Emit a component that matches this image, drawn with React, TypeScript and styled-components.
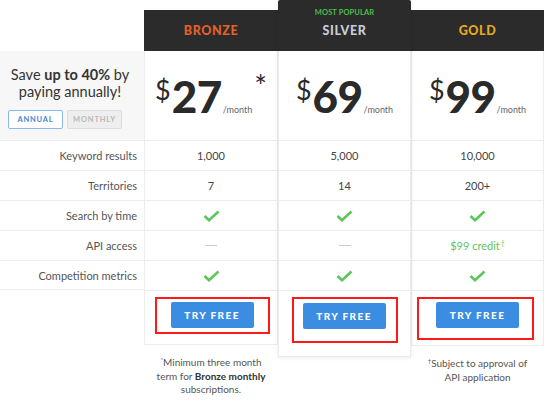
import React from "react";
import styled, { createGlobalStyle } from "styled-components";

const GlobalStyle = createGlobalStyle`
  body {
    margin: 0;
    background: #ffffff;
    font-family: Lato, "Open Sans", Arial, sans-serif;
    color: #444;
  }
`;

const Page = styled.div`
  display: flex;
  align-items: flex-start;
  width: 554px;
  height: 402px;
  overflow: hidden;
`;

const LabelColumn = styled.div`
  width: 144px;
  display: flex;
  flex-direction: column;
  padding-top: 51px;
`;

const Promo = styled.div`
  height: 89px;
  background: #f7f7f7;
  display: flex;
  flex-direction: column;
  align-items: center;
  justify-content: center;
  box-sizing: border-box;
  padding-top: 4px;
`;

const PromoText = styled.div`
  font-size: 14.5px;
  line-height: 17px;
  color: #333;
  text-align: center;
  margin-left: -4px;
  b {
    font-weight: 700;
  }
`;

const Toggle = styled.div`
  display: flex;
  gap: 4px;
  margin-top: 10px;
  align-self: flex-start;
  margin-left: 8px;
`;

const ToggleButton = styled.div<{ $active?: boolean }>`
  width: 55px;
  height: 19px;
  box-sizing: border-box;
  display: flex;
  align-items: center;
  justify-content: center;
  font-size: 7.5px;
  font-weight: 700;
  letter-spacing: 0.8px;
  border-radius: 2px;
  border: 1px solid ${({ $active }) => ($active ? "#8ab8ec" : "#dcdcdc")};
  background: ${({ $active }) => ($active ? "#ffffff" : "#eeeeee")};
  color: ${({ $active }) => ($active ? "#4a86cf" : "#b8b8b8")};
`;

const LabelRow = styled.div<{ $last?: boolean }>`
  height: 30px;
  box-sizing: border-box;
  border-top: 1px solid #ececec;
  border-bottom: ${({ $last }) => ($last ? "1px solid #ececec" : "none")};
  display: flex;
  align-items: center;
  justify-content: flex-end;
  padding-right: 7px;
  font-size: 11px;
  color: #555;
`;

const PlanColumn = styled.div<{ $width: number; $top: number }>`
  width: ${({ $width }) => $width}px;
  margin-top: ${({ $top }) => $top}px;
  display: flex;
  flex-direction: column;
  align-items: center;
`;

const Card = styled.div<{ $featured?: boolean }>`
  width: 100%;
  box-sizing: border-box;
  border: 1px solid #ececec;
  border-top: none;
  background: #fff;
  box-shadow: ${({ $featured }) =>
    $featured ? "0 1px 4px rgba(0, 0, 0, 0.08)" : "none"};
  position: relative;
  z-index: ${({ $featured }) => ($featured ? 1 : 0)};
`;

const Header = styled.div<{ $height: number; $featured?: boolean }>`
  height: ${({ $height }) => $height}px;
  background: #2b2b2b;
  border-radius: ${({ $featured }) => ($featured ? "2px 2px 0 0" : "0")};
  margin: 0 -1px;
  display: flex;
  flex-direction: column;
  align-items: center;
  justify-content: flex-end;
  padding-bottom: 13px;
  box-sizing: border-box;
`;

const Popular = styled.div`
  font-size: 7.5px;
  font-weight: 700;
  color: #4cbf4c;
  margin-bottom: 6px;
  letter-spacing: 0.1px;
`;

const PlanName = styled.div<{ $color: string }>`
  font-size: 12.5px;
  font-weight: 900;
  letter-spacing: 0.6px;
  color: ${({ $color }) => $color};
`;

const PriceCell = styled.div`
  height: 89px;
  display: flex;
  align-items: center;
  justify-content: center;
`;

const Price = styled.div`
  display: flex;
  align-items: flex-start;
  color: #2a2a2a;
`;

const Dollar = styled.span`
  font-size: 27px;
  line-height: 27px;
  margin-top: -2px;
  margin-right: 1px;
`;

const Amount = styled.span`
  font-size: 44px;
  font-weight: 900;
  line-height: 36px;
  letter-spacing: -0.5px;
`;

const PerMonth = styled.span`
  font-size: 9px;
  color: #666;
  align-self: flex-end;
  margin-bottom: -1px;
  margin-left: 1px;
`;

const Star = styled.span`
  font-size: 30px;
  line-height: 20px;
  margin-left: 2px;
  margin-top: -3px;
`;

const FeatureCell = styled.div<{ $green?: boolean }>`
  height: 30px;
  box-sizing: border-box;
  border-top: 1px solid #ececec;
  display: flex;
  align-items: center;
  justify-content: center;
  font-size: 11px;
  color: ${({ $green }) => ($green ? "#62c262" : "#444")};
  sup {
    font-size: 7px;
    margin-left: 1px;
    align-self: flex-start;
    margin-top: 8px;
  }
`;

const Dash = styled.span`
  width: 12px;
  height: 1px;
  background: #cbcbcb;
`;

const ActionCell = styled.div<{ $height: number }>`
  height: ${({ $height }) => $height}px;
  border-top: 1px solid #ececec;
  display: flex;
  justify-content: center;
  align-items: flex-start;
  padding-top: 6px;
  box-sizing: border-box;
`;

const Highlight = styled.div<{ $pad: string; $shift: number }>`
  border: 2px solid #ff1a1a;
  padding: ${({ $pad }) => $pad};
  margin-left: ${({ $shift }) => $shift}px;
`;

const TryButton = styled.button`
  width: 83px;
  height: 26px;
  border: none;
  border-radius: 2px;
  background: #3a8de0;
  color: #fff;
  font-family: inherit;
  font-size: 10px;
  font-weight: 900;
  letter-spacing: 1.4px;
  display: block;
`;

const Footnote = styled.div`
  margin-top: 8px;
  font-size: 10px;
  line-height: 13.5px;
  color: #555;
  text-align: center;
  sup {
    font-size: 6px;
    vertical-align: 4px;
  }
  b {
    color: #333;
  }
`;

const Check = () => (
  <svg width="17" height="12" viewBox="0 0 17 12">
    <path
      d="M1.5 6 L6 10.2 L15.5 1.5"
      fill="none"
      stroke="#5cc65c"
      strokeWidth="2.6"
    />
  </svg>
);

type Value = string | "check" | "dash";

interface Plan {
  name: string;
  color: string;
  price: string;
  star?: boolean;
  width: number;
  top: number;
  headerHeight: number;
  featured?: boolean;
  values: Value[];
  actionHeight: number;
  pad: string;
  shift: number;
  note?: React.ReactNode;
}

const labels = [
  "Keyword results",
  "Territories",
  "Search by time",
  "API access",
  "Competition metrics",
];

const plans: Plan[] = [
  {
    name: "BRONZE",
    color: "#e2622a",
    price: "27",
    star: true,
    width: 134,
    top: 10,
    headerHeight: 41,
    values: ["1,000", "7", "check", "dash", "check"],
    actionHeight: 54,
    pad: "3px 14px 4px",
    shift: 2,
    note: (
      <>
        <sup>*</sup>Minimum three month
        <br />
        term for <b>Bronze monthly</b>
        <br />
        subscriptions.
      </>
    ),
  },
  {
    name: "SILVER",
    color: "#c9cdd8",
    price: "69",
    width: 133,
    top: 0,
    headerHeight: 51,
    featured: true,
    values: ["5,000", "14", "check", "dash", "check"],
    actionHeight: 66,
    pad: "4px 10px 12px 9px",
    shift: 0,
  },
  {
    name: "GOLD",
    color: "#eaa81e",
    price: "99",
    width: 133,
    top: 10,
    headerHeight: 41,
    values: ["10,000", "200+", "check", "credit", "check"],
    actionHeight: 55,
    pad: "3px 13px 10px 17px",
    shift: -4,
    note: (
      <>
        <sup>†</sup>Subject to approval of
        <br />
        API application
      </>
    ),
  },
];

const renderValue = (value: Value, key: number) => {
  if (value === "check")
    return (
      <FeatureCell key={key}>
        <Check />
      </FeatureCell>
    );
  if (value === "dash")
    return (
      <FeatureCell key={key}>
        <Dash />
      </FeatureCell>
    );
  if (value === "credit")
    return (
      <FeatureCell key={key} $green>
        $99 credit<sup>†</sup>
      </FeatureCell>
    );
  return <FeatureCell key={key}>{value}</FeatureCell>;
};

const App: React.FC = () => {
  return (
    <>
      <GlobalStyle />
      <Page>
        <LabelColumn>
          <Promo>
            <PromoText>
              Save <b>up to 40%</b> by
              <br />
              paying annually!
            </PromoText>
            <Toggle>
              <ToggleButton $active>ANNUAL</ToggleButton>
              <ToggleButton>MONTHLY</ToggleButton>
            </Toggle>
          </Promo>
          {labels.map((label, i) => (
            <LabelRow key={label} $last={i === labels.length - 1}>
              {label}
            </LabelRow>
          ))}
        </LabelColumn>

        {plans.map((plan) => (
          <PlanColumn key={plan.name} $width={plan.width} $top={plan.top}>
            <Card $featured={plan.featured}>
              <Header $height={plan.headerHeight} $featured={plan.featured}>
                {plan.featured && <Popular>MOST POPULAR</Popular>}
                <PlanName $color={plan.color}>{plan.name}</PlanName>
              </Header>
              <PriceCell>
                <Price>
                  <Dollar>$</Dollar>
                  <Amount>{plan.price}</Amount>
                  <PerMonth>/month</PerMonth>
                  {plan.star && <Star>*</Star>}
                </Price>
              </PriceCell>
              {plan.values.map((v, i) => renderValue(v, i))}
              <ActionCell $height={plan.actionHeight}>
                <Highlight $pad={plan.pad} $shift={plan.shift}>
                  <TryButton>TRY FREE</TryButton>
                </Highlight>
              </ActionCell>
            </Card>
            {plan.note && <Footnote>{plan.note}</Footnote>}
          </PlanColumn>
        ))}
      </Page>
    </>
  );
};

export default App;
